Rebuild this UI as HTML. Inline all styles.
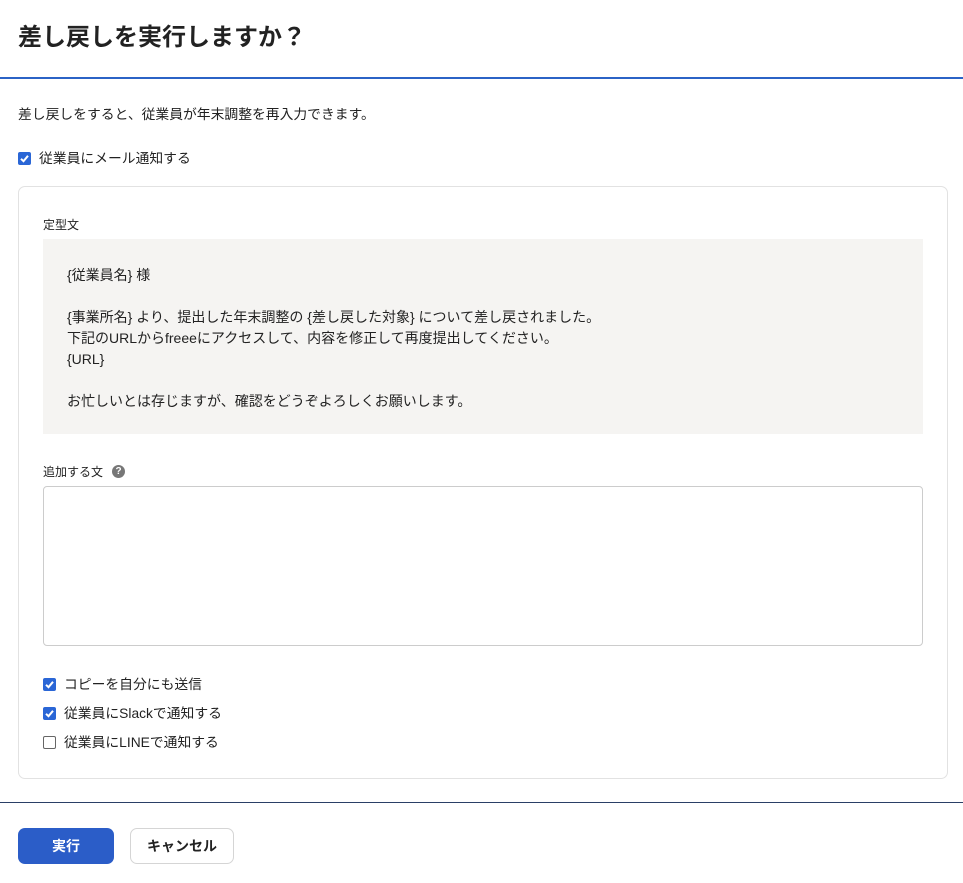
<!DOCTYPE html>
<html><head><meta charset="utf-8"><style>
*{box-sizing:border-box;margin:0;padding:0}
body{width:963px;height:883px;background:#fff;font-family:"Liberation Sans","Noto Sans CJK JP",sans-serif;color:#222;position:relative;overflow:hidden}
.a{position:absolute}
.t{font-size:13.8px;line-height:16px;white-space:nowrap}
.cb{position:absolute;width:13px;height:13px;border-radius:2px;background:#2a66d6}
.cb svg{display:block}
.cbo{position:absolute;width:13px;height:13px;border-radius:2px;border:1px solid #666;background:#fff}
</style></head><body>
<div class="a" style="left:18px;top:22px;font-size:24px;font-weight:bold;line-height:32px;color:#222">差し戻しを実行しますか？</div>
<div class="a" style="left:0;top:77px;width:963px;height:2px;background:#2b63c6"></div>
<div class="a t" style="left:18px;top:107px">差し戻しをすると、従業員が年末調整を再入力できます。</div>
<div class="cb" style="left:18px;top:152px"><svg width="13" height="13"><path d="M3 6.8L5.5 9.2L10 3.8" stroke="#fff" stroke-width="2" fill="none"/></svg></div>
<div class="a t" style="left:39px;top:151px">従業員にメール通知する</div>
<div class="a" style="left:18px;top:186px;width:930px;height:593px;border:1px solid #e2e2e2;border-radius:7px"></div>
<div class="a" style="left:43px;top:218px;font-size:12px;line-height:14px">定型文</div>
<div class="a" style="left:43px;top:239px;width:880px;height:195px;background:#f5f4f2"></div>
<div class="a t" style="left:67px;top:265px;line-height:21px;font-size:14px">{従業員名} 様<br><br>{事業所名} より、提出した年末調整の {差し戻した対象} について差し戻されました。<br>下記のURLからfreeeにアクセスして、内容を修正して再度提出してください。<br>{URL}<br><br>お忙しいとは存じますが、確認をどうぞよろしくお願いします。</div>
<div class="a" style="left:43px;top:465px;font-size:12px;line-height:14px">追加する文</div>
<div class="a" style="left:112px;top:465px;width:13px;height:13px;border-radius:50%;background:#777;color:#fff;font-size:10px;font-weight:bold;line-height:13px;text-align:center">?</div>
<div class="a" style="left:43px;top:486px;width:880px;height:160px;border:1px solid #ccc;border-radius:4px"></div>
<div class="cb" style="left:43px;top:678px"><svg width="13" height="13"><path d="M3 6.8L5.5 9.2L10 3.8" stroke="#fff" stroke-width="2" fill="none"/></svg></div>
<div class="a t" style="left:64px;top:677px">コピーを自分にも送信</div>
<div class="cb" style="left:43px;top:707px"><svg width="13" height="13"><path d="M3 6.8L5.5 9.2L10 3.8" stroke="#fff" stroke-width="2" fill="none"/></svg></div>
<div class="a t" style="left:64px;top:706px">従業員にSlackで通知する</div>
<div class="cbo" style="left:43px;top:736px"></div>
<div class="a t" style="left:64px;top:735px">従業員にLINEで通知する</div>
<div class="a" style="left:0;top:802px;width:963px;height:1px;background:#2a3f66"></div>
<div class="a" style="left:18px;top:828px;width:96px;height:36px;border-radius:7px;background:#2b5dc8;color:#fff;font-size:14px;font-weight:bold;line-height:36px;text-align:center">実行</div>
<div class="a" style="left:130px;top:828px;width:104px;height:36px;border-radius:7px;border:1px solid #d5d5d5;background:#fff;color:#222;font-size:14px;font-weight:bold;line-height:34px;text-align:center">キャンセル</div>
</body></html>
